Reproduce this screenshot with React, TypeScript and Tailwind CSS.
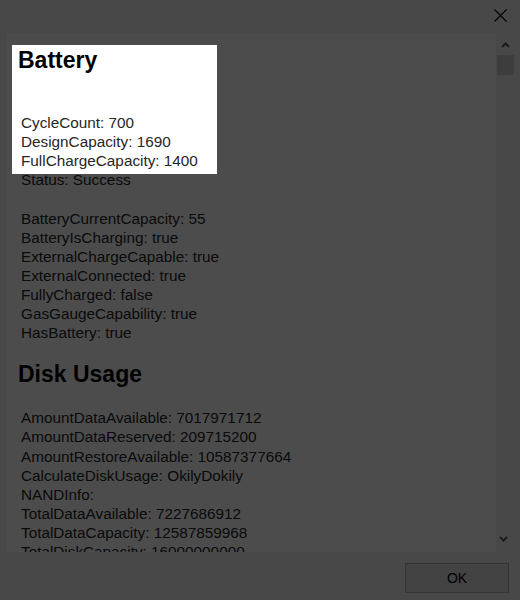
import React from "react";

type Section = { title: string; lines: string[] };

const sections: Section[] = [
  {
    title: "Battery",
    lines: [
      "",
      "CycleCount: 700",
      "DesignCapacity: 1690",
      "FullChargeCapacity: 1400",
      "Status: Success",
      "",
      "BatteryCurrentCapacity: 55",
      "BatteryIsCharging: true",
      "ExternalChargeCapable: true",
      "ExternalConnected: true",
      "FullyCharged: false",
      "GasGaugeCapability: true",
      "HasBattery: true",
      "",
    ],
  },
  {
    title: "Disk Usage",
    lines: [
      "AmountDataAvailable: 7017971712",
      "AmountDataReserved: 209715200",
      "AmountRestoreAvailable: 10587377664",
      "CalculateDiskUsage: OkilyDokily",
      "NANDInfo:",
      "TotalDataAvailable: 7227686912",
      "TotalDataCapacity: 12587859968",
      "TotalDiskCapacity: 16000000000",
    ],
  },
];

function Chevron({ up }: { up?: boolean }) {
  return (
    <svg width="9" height="6" viewBox="0 0 9 6" className="block">
      <polyline
        points={up ? "1,5 4.5,1.5 8,5" : "1,1 4.5,4.5 8,1"}
        fill="none"
        stroke="#606060"
        strokeWidth="2"
      />
    </svg>
  );
}

export default function App() {
  return (
    <div
      className="relative w-[520px] h-[600px] overflow-hidden bg-[#f0f0f0] flex flex-col"
      style={{ fontFamily: '"Liberation Sans", Arial, sans-serif' }}
    >
      {/* Title bar */}
      <div className="h-[34px] shrink-0 flex items-start justify-end pr-[13px] pt-[9px]">
        <svg width="13" height="13" viewBox="0 0 13 13">
          <path d="M0.5 0.5 L12.5 12.5 M12.5 0.5 L0.5 12.5" stroke="#000" strokeWidth="1.1" fill="none" />
        </svg>
      </div>

      {/* Content */}
      <div className="h-[518px] shrink-0 ml-[7px] mr-[6px] flex bg-white">
        <div className="flex-1 overflow-hidden pl-[11px] pt-[13px]">
          {sections.map((s) => (
            <div key={s.title}>
              <h2 className="text-[23px] leading-[26px] font-bold text-black mb-[21px]">{s.title}</h2>
              <div className="pl-[3px] text-[15.3px] leading-[19.1px] text-[#262626]">
                {s.lines.map((l, i) =>
                  l ? (
                    <div key={i} className="whitespace-nowrap">{l}</div>
                  ) : (
                    <div key={i} className="h-[19.1px]" />
                  )
                )}
              </div>
            </div>
          ))}
        </div>

        {/* Scrollbar */}
        <div className="w-[18px] bg-[#f0f0f0] flex flex-col items-center">
          <div className="h-[20px] flex items-center justify-center pt-[2px]">
            <Chevron up />
          </div>
          <div className="w-[17px] h-[20px] bg-[#cdcdcd] mt-[1px]" />
          <div className="flex-1" />
          <div className="h-[20px] flex items-start justify-center pt-[4px] pr-[3px]">
            <Chevron />
          </div>
        </div>
      </div>

      {/* Footer */}
      <div className="flex-1 flex justify-end items-start pt-[11px] pr-[11px]">
        <button className="w-[104px] h-[30px] bg-[#e1e1e1] border border-[#adadad] text-[14px] text-black">
          OK
        </button>
      </div>

      {/* Spotlight overlay */}
      <div className="absolute left-[12px] top-[45px] w-[205px] h-[129px] shadow-[0_0_0_9999px_rgba(0,0,0,0.7)] pointer-events-none" />
    </div>
  );
}
